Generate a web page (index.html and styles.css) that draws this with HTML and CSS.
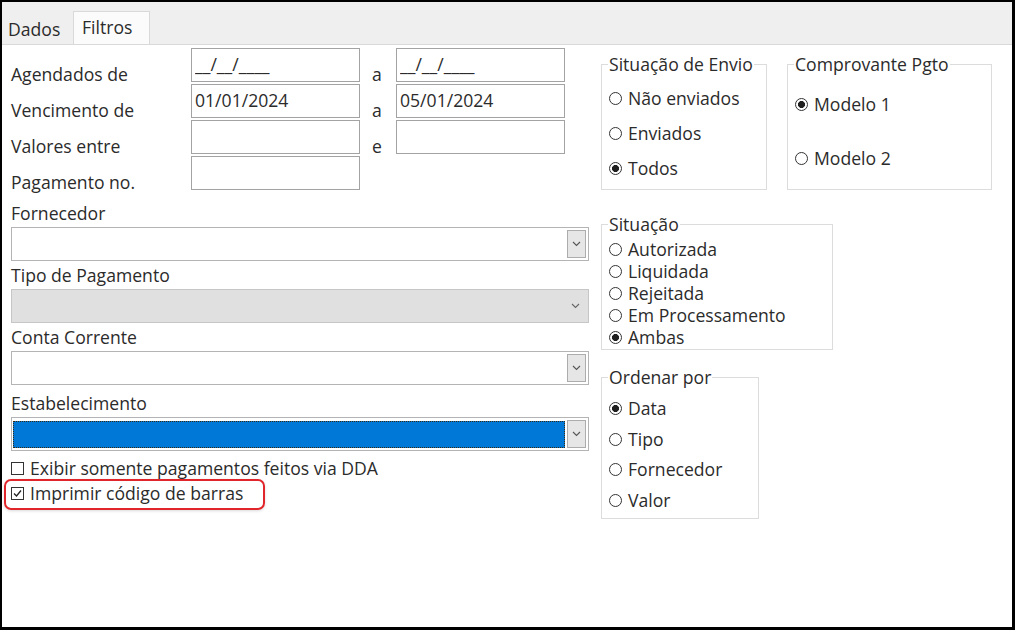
FILE: index.html
```html
<!DOCTYPE html>
<html lang="pt-BR">
  <head>
    <meta charset="UTF-8" />
    <title>Filtros</title>
    <link rel="stylesheet" href="styles.css">
  </head>
  <body>
    <div class="frame">
      <!-- Tab strip -->
      <div class="tabs">
        <div class="tab">Dados</div>
        <div class="tab active">Filtros</div>
      </div>

      <div class="content">
        <!-- Left column -->
        <div class="left-col">
          <div class="range-grid">
            <div class="lbl">Agendados de</div>
            <input class="box" type="text" value="__/__/____" readonly>
            <div class="lbl join">a</div>
            <input class="box" type="text" value="__/__/____" readonly>

            <div class="lbl">Vencimento de</div>
            <input class="box" type="text" value="01/01/2024" readonly>
            <div class="lbl join">a</div>
            <input class="box" type="text" value="05/01/2024" readonly>

            <div class="lbl">Valores entre</div>
            <input class="box" type="text" value="" readonly>
            <div class="lbl join">e</div>
            <input class="box" type="text" value="" readonly>

            <div class="lbl">Pagamento no.</div>
            <input class="box" type="text" value="" readonly>
          </div>

          <div class="field first">
            <div class="field-label">Fornecedor</div>
            <div class="combo">
              <div class="drop">
                <svg width="9" height="6" viewBox="0 0 9 6"><polyline points="1,1 4.5,4.5 8,1" fill="none" stroke="#555" stroke-width="1.1"/></svg>
              </div>
            </div>
          </div>

          <div class="field">
            <div class="field-label">Tipo de Pagamento</div>
            <div class="combo disabled">
              <div class="drop flat">
                <svg width="9" height="6" viewBox="0 0 9 6"><polyline points="1,1 4.5,4.5 8,1" fill="none" stroke="#666" stroke-width="1.1"/></svg>
              </div>
            </div>
          </div>

          <div class="field">
            <div class="field-label">Conta Corrente</div>
            <div class="combo">
              <div class="drop">
                <svg width="9" height="6" viewBox="0 0 9 6"><polyline points="1,1 4.5,4.5 8,1" fill="none" stroke="#555" stroke-width="1.1"/></svg>
              </div>
            </div>
          </div>

          <div class="field last">
            <div class="field-label">Estabelecimento</div>
            <div class="combo focused">
              <div class="selection"></div>
              <div class="drop">
                <svg width="9" height="6" viewBox="0 0 9 6"><polyline points="1,1 4.5,4.5 8,1" fill="none" stroke="#555" stroke-width="1.1"/></svg>
              </div>
            </div>
          </div>

          <div class="check-row">
            <span class="check"></span>
            <span>Exibir somente pagamentos feitos via DDA</span>
          </div>
          <div class="check-row marked">
            <span class="check">
              <svg width="11" height="11" viewBox="0 0 11 11"><polyline points="2,5.5 4.5,8 9,2.5" fill="none" stroke="#222" stroke-width="1.3"/></svg>
            </span>
            <span>Imprimir código de barras</span>
          </div>
        </div>

        <!-- Right column -->
        <div class="right-col">
          <div class="group-row">
            <fieldset class="group envio">
              <legend>Situação de Envio</legend>
              <div class="opt"><span class="radio"></span>Não enviados</div>
              <div class="opt"><span class="radio"></span>Enviados</div>
              <div class="opt"><span class="radio on"></span>Todos</div>
            </fieldset>

            <fieldset class="group comprovante">
              <legend>Comprovante Pgto</legend>
              <div class="opt"><span class="radio on"></span>Modelo 1</div>
              <div class="opt"><span class="radio"></span>Modelo 2</div>
            </fieldset>
          </div>

          <fieldset class="group situacao">
            <legend>Situação</legend>
            <div class="opt"><span class="radio"></span>Autorizada</div>
            <div class="opt"><span class="radio"></span>Liquidada</div>
            <div class="opt"><span class="radio"></span>Rejeitada</div>
            <div class="opt"><span class="radio"></span>Em Processamento</div>
            <div class="opt"><span class="radio on"></span>Ambas</div>
          </fieldset>

          <fieldset class="group ordenar">
            <legend>Ordenar por</legend>
            <div class="opt"><span class="radio on"></span>Data</div>
            <div class="opt"><span class="radio"></span>Tipo</div>
            <div class="opt"><span class="radio"></span>Fornecedor</div>
            <div class="opt"><span class="radio"></span>Valor</div>
          </fieldset>
        </div>
      </div>
    </div>
  </body>
</html>
```

FILE: styles.css
```css
body {
  margin: 0;
  font-family: "Open Sans", "Noto Sans", sans-serif;
  font-size: 17.6px;
  color: #2b2b2b;
  background: #ffffff;
}

.frame {
  box-sizing: border-box;
  height: 630px;
  border: 2px solid #000;
  border-right-width: 3px;
  border-bottom-width: 3px;
  background: #ffffff;
}

/* Tab strip */
.tabs {
  height: 42px;
  background: #efefef;
  border-bottom: 1px solid #d9d9d9;
  display: flex;
  align-items: flex-end;
}

.tab {
  width: 65px;
  height: 30px;
  line-height: 30px;
  padding-left: 6px;
}

.tab.active {
  box-sizing: border-box;
  width: 77px;
  height: 33px;
  line-height: 31px;
  padding-left: 8px;
  background: #fbfbfb;
  border: 1px solid #d9d9d9;
  border-bottom: none;
}

/* Main area */
.content {
  display: flex;
  padding: 3px 0 0 9px;
}

.left-col {
  width: 578px;
  display: flex;
  flex-direction: column;
  align-items: flex-start;
}

.range-grid {
  display: grid;
  grid-template-columns: 180px 169px 36px 170px;
  grid-auto-rows: 34px;
  row-gap: 2px;
}

.lbl {
  padding-top: 14px;
  line-height: 24px;
  white-space: nowrap;
}

.join {
  text-align: center;
  padding-right: 2px;
}

.box {
  box-sizing: border-box;
  width: 169px;
  height: 34px;
  margin: 0;
  padding: 0 3px 3px;
  border: 1px solid #a3a3a3;
  font-family: inherit;
  font-size: 17.6px;
  color: #2b2b2b;
  background: #ffffff;
  outline: none;
}

.field {
  width: 100%;
}

.field.first {
  margin-top: 9px;
}

.field.last {
  margin-top: 4px;
}

.field-label {
  line-height: 28px;
}

.combo {
  box-sizing: border-box;
  height: 34px;
  border: 1px solid #b4b4b4;
  padding: 2px;
  display: flex;
  justify-content: flex-end;
  background: #ffffff;
}

.combo.disabled {
  background: #e0e0e0;
  border-color: #c6c6c6;
}

.drop {
  box-sizing: border-box;
  width: 19px;
  height: 28px;
  border: 1px solid #acacac;
  background: #e6e6e6;
  display: flex;
  align-items: center;
  justify-content: center;
}

.drop.flat {
  background: transparent;
  border-color: transparent;
  width: 22px;
}

.selection {
  flex: 1;
  margin: 1px 2px 0 -1px;
  background: #0078d7;
  border: 1px dotted #3a2a10;
}

/* Checkboxes */
.check-row {
  display: flex;
  align-items: center;
  gap: 6px;
  line-height: 24px;
  margin-top: 5px;
}

.check-row.marked {
  margin: -1px 0 0 -7px;
  padding: 0 20px 3px 5px;
  border: 2px solid #e0262b;
  border-radius: 7px;
  box-shadow: 0 1px 3px rgba(0, 0, 0, 0.15);
}

.check {
  box-sizing: border-box;
  width: 13px;
  height: 13px;
  border: 1px solid #333;
  display: flex;
  align-items: center;
  justify-content: center;
  margin-top: 1px;
}

/* Right column */
.right-col {
  margin-left: 12px;
  padding-top: 4px;
  display: flex;
  flex-direction: column;
  align-items: flex-start;
}

.group-row {
  display: flex;
  gap: 20px;
}

.group {
  margin: 0;
  padding: 4px 6px 4px;
  border: 1px solid #dcdcdc;
  min-width: 0;
  box-sizing: border-box;
}

.group legend {
  padding: 0 1px;
  line-height: 24px;
}

.opt {
  display: flex;
  align-items: center;
  gap: 6px;
  white-space: nowrap;
}

.radio {
  box-sizing: border-box;
  flex: none;
  width: 13px;
  height: 13px;
  border: 1px solid #333;
  border-radius: 50%;
  margin-left: 1px;
  margin-top: 1px;
}

.radio.on {
  background: radial-gradient(circle, #1f1f1f 0 3.2px, transparent 3.8px);
}

.envio {
  width: 166px;
}

.envio .opt {
  height: 35px;
}

.comprovante {
  width: 205px;
  padding-top: 1px;
}

.comprovante .opt {
  height: 54px;
}

.situacao {
  width: 232px;
  margin-top: 22px;
  padding: 2px 6px 1px;
}

.situacao .opt {
  height: 22px;
}

.ordenar {
  width: 158px;
  margin-top: 15px;
  padding: 4px 6px 3px;
}

.ordenar .opt {
  height: 30.5px;
}
```
